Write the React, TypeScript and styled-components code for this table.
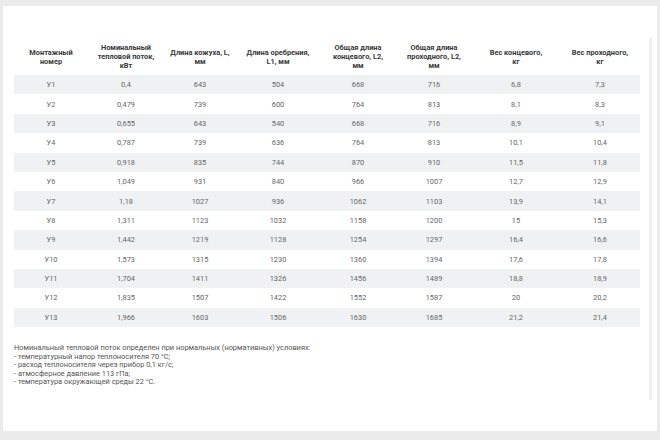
import React from "react";
import styled, { createGlobalStyle } from "styled-components";

const Global = createGlobalStyle`
  html, body { margin: 0; padding: 0; }
  body {
    background: #ebebeb;
    font-family: Roboto, "Noto Sans", Arial, sans-serif;
  }
`;

const Page = styled.div`
  padding: 6px 3px 9px 3px;
  height: 440px;
  box-sizing: border-box;
`;

const Card = styled.div`
  background: #fff;
  width: 654px;
  height: 425px;
  display: flex;
  padding: 32px 0 0 11px;
  box-sizing: border-box;
`;

const Main = styled.div`
  width: 626px;
  display: flex;
  flex-direction: column;
`;

const Track = styled.div`
  width: 3px;
  height: 362px;
  margin: 0 0 0 9px;
  background: #efefef;
`;

const Table = styled.table`
  width: 626px;
  border-collapse: collapse;
  table-layout: fixed;
`;

const Th = styled.th<{ $w: number }>`
  box-sizing: border-box;
  width: ${(p) => p.$w}px;
  height: 37px;
  padding: 0 2px;
  font-size: 7.4px;
  line-height: 9px;
  font-weight: 700;
  color: #3a3a3a;
  text-align: center;
  vertical-align: middle;
`;

const Tr = styled.tr<{ $odd: boolean }>`
  background: ${(p) => (p.$odd ? "#f0f1f3" : "transparent")};
`;

const Td = styled.td`
  height: 19.4px;
  padding: 0;
  font-size: 7.4px;
  color: #666;
  text-align: center;
  vertical-align: middle;
`;

const Note = styled.div`
  margin-top: 17px;
  font-size: 7.4px;
  line-height: 8.6px;
  color: #555;
`;

const widths = [74, 76, 72, 84, 76, 76, 88, 80];

const headLines: string[][] = [
  ["Монтажный", "номер"],
  ["Номинальный", "тепловой поток,", "кВт"],
  ["Длина кожуха, L,", "мм"],
  ["Длина оребрения,", "L1, мм"],
  ["Общая длина", "концевого, L2,", "мм"],
  ["Общая длина", "проходного, L2,", "мм"],
  ["Вес концевого,", "кг"],
  ["Вес проходного,", "кг"],
];

const rows = [
  ["У1", "0,4", "643", "504", "668", "716", "6,8", "7,3"],
  ["У2", "0,479", "739", "600", "764", "813", "8,1", "8,3"],
  ["У3", "0,655", "643", "540", "668", "716", "8,9", "9,1"],
  ["У4", "0,787", "739", "636", "764", "813", "10,1", "10,4"],
  ["У5", "0,918", "835", "744", "870", "910", "11,5", "11,8"],
  ["У6", "1,049", "931", "840", "966", "1007", "12,7", "12,9"],
  ["У7", "1,18", "1027", "936", "1062", "1103", "13,9", "14,1"],
  ["У8", "1,311", "1123", "1032", "1158", "1200", "15", "15,3"],
  ["У9", "1,442", "1219", "1128", "1254", "1297", "16,4", "16,6"],
  ["У10", "1,573", "1315", "1230", "1360", "1394", "17,6", "17,8"],
  ["У11", "1,704", "1411", "1326", "1456", "1489", "18,8", "18,9"],
  ["У12", "1,835", "1507", "1422", "1552", "1587", "20", "20,2"],
  ["У13", "1,966", "1603", "1506", "1630", "1685", "21,2", "21,4"],
];

export default function App() {
  return (
    <>
      <Global />
      <Page>
        <Card>
          <Main>
            <Table>
              <thead>
                <tr>
                  {headLines.map((lines, i) => (
                    <Th key={i} $w={widths[i]}>
                      {lines.map((l, j) => (
                        <React.Fragment key={j}>
                          {j > 0 && <br />}
                          {l}
                        </React.Fragment>
                      ))}
                    </Th>
                  ))}
                </tr>
              </thead>
              <tbody>
                {rows.map((r, i) => (
                  <Tr key={i} $odd={i % 2 === 0}>
                    {r.map((c, j) => (
                      <Td key={j}>{c}</Td>
                    ))}
                  </Tr>
                ))}
              </tbody>
            </Table>
            <Note>
              Номинальный тепловой поток определен при нормальных (нормативных) условиях:
              <br />- температурный напор теплоносителя 70 °С;
              <br />- расход теплоносителя через прибор 0,1 кг/с;
              <br />- атмосферное давление 113 гПа;
              <br />- температура окружающей среды 22 °С.
            </Note>
          </Main>
          <Track />
        </Card>
      </Page>
    </>
  );
}
